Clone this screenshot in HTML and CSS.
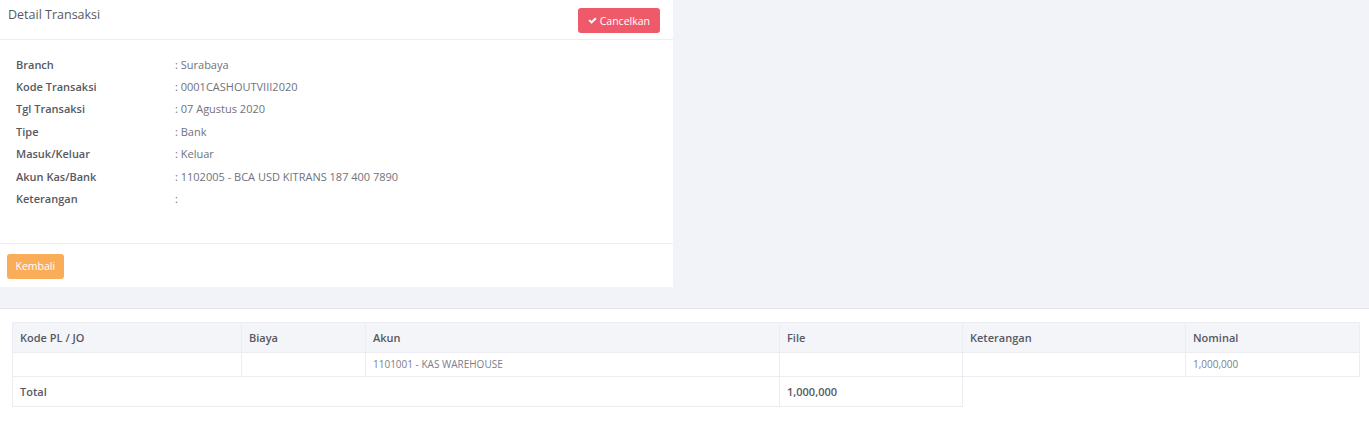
FILE: index.html
```html
<!DOCTYPE html>
<html lang="id">
<head>
  <meta charset="UTF-8" />
  <title>Detail Transaksi</title>
  <link rel="stylesheet" href="styles.css">
</head>
<body>
  <div class="top">
    <div class="card">
      <div class="card-head">
        <h3>Detail Transaksi</h3>
        <button class="btn btn-danger">
          <svg class="check" viewBox="0 0 1792 1792"><path fill="#fff" d="M1671 566q0 40-28 68l-724 724-136 136q-28 28-68 28t-68-28l-136-136-362-362q-28-28-28-68t28-68l136-136q28-28 68-28t68 28l294 295 656-657q28-28 68-28t68 28l136 136q28 28 28 68z"/></svg>
          Cancelkan
        </button>
      </div>
      <div class="card-body">
        <div class="row"><span class="lbl">Branch</span><span class="val">: Surabaya</span></div>
        <div class="row"><span class="lbl">Kode Transaksi</span><span class="val">: 0001CASHOUTVIII2020</span></div>
        <div class="row"><span class="lbl">Tgl Transaksi</span><span class="val">: 07 Agustus 2020</span></div>
        <div class="row"><span class="lbl">Tipe</span><span class="val">: Bank</span></div>
        <div class="row"><span class="lbl">Masuk/Keluar</span><span class="val">: Keluar</span></div>
        <div class="row"><span class="lbl">Akun Kas/Bank</span><span class="val">: 1102005 - BCA USD KITRANS 187 400 7890</span></div>
        <div class="row"><span class="lbl">Keterangan</span><span class="val">:</span></div>
      </div>
      <div class="card-foot">
        <button class="btn btn-warning">Kembali</button>
      </div>
    </div>
  </div>

  <div class="bottom">
    <table class="detail">
      <thead>
        <tr>
          <th class="c1">Kode PL / JO</th>
          <th class="c2">Biaya</th>
          <th class="c3">Akun</th>
          <th class="c4">File</th>
          <th class="c5">Keterangan</th>
          <th class="c6">Nominal</th>
        </tr>
      </thead>
      <tbody>
        <tr>
          <td></td>
          <td></td>
          <td>1101001 - KAS WAREHOUSE</td>
          <td></td>
          <td></td>
          <td>1,000,000</td>
        </tr>
        <tr class="total">
          <td colspan="3">Total</td>
          <td>1,000,000</td>
          <td class="empty" colspan="2"></td>
        </tr>
      </tbody>
    </table>
  </div>
</body>
</html>
```

FILE: styles.css
```css
body { margin: 0; font-family: "Open Sans", sans-serif; background: #fff; color: #575962; }
.top { background: #f2f3f8; padding-bottom: 21px; border-bottom: 1px solid #e6e7ec; }
.card { width: 673px; background: #fff; }
.card-head { display: flex; justify-content: space-between; align-items: flex-start; height: 39px; padding: 0 13px 0 8px; border-bottom: 1px solid #ebedf2; }
.card-head h3 { margin: 0; padding-top: 6px; font-size: 12.5px; font-weight: 400; color: #575962; }
.btn { font-family: "Open Sans", sans-serif; border: 0; border-radius: 3px; color: #fff; font-size: 10.5px; cursor: pointer; }
.btn-danger { display: flex; align-items: center; gap: 3px; background: #ef5a6a; margin-top: 8px; height: 25px; padding: 0 10px; }
.check { width: 9px; height: 9px; }
.btn-warning { background: #f9ad59; height: 25px; padding: 0 8.5px; }
.card-body { padding: 13px 16px 28px; height: 162px; border-bottom: 1px solid #ebedf2; }
.row { display: flex; height: 22.4px; align-items: center; font-size: 11px; }
.lbl { width: 159px; font-weight: 600; color: #575962; }
.val { color: #6f727d; }
.card-foot { padding: 9px 7px 8px; }
.bottom { padding: 13px 9px 20px 12px; }
.detail { width: 100%; border-collapse: collapse; font-size: 11px; }
.detail th, .detail td { border: 1px solid #ebedf2; padding: 0 7px; text-align: left; }
.detail th { background: #f4f5f8; height: 29px; font-weight: 600; color: #575962; }
.detail td { height: 23px; font-size: 10px; color: #7b7e89; }
.detail .total td { height: 29px; font-size: 11px; font-weight: 600; color: #575962; }
.detail .total td.empty { border: 0; border-top: 1px solid #ebedf2; }
.c1 { width: 214px; }
.c2 { width: 109px; }
.c3 { width: 399px; }
.c4 { width: 168px; }
.c5 { width: 208px; }
```
